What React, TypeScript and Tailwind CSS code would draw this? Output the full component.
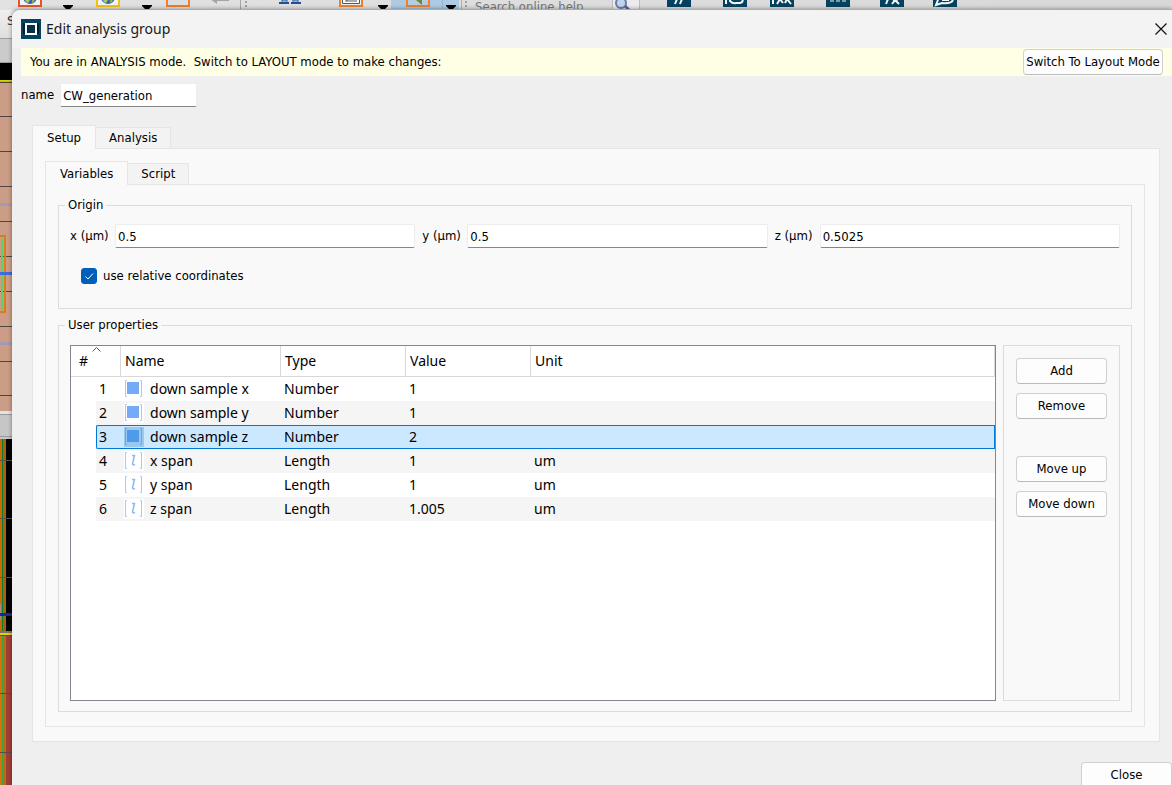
import { useState } from "react";
import type { ReactNode } from "react";

type Property = { name: string; type: "Number" | "Length"; value: string; unit: string };

const properties: Property[] = [
  { name: "down sample x", type: "Number", value: "1", unit: "" },
  { name: "down sample y", type: "Number", value: "1", unit: "" },
  { name: "down sample z", type: "Number", value: "2", unit: "" },
  { name: "x span", type: "Length", value: "1", unit: "um" },
  { name: "y span", type: "Length", value: "1", unit: "um" },
  { name: "z span", type: "Length", value: "1.005", unit: "um" },
];

function Caret() {
  return (
    <svg width="10" height="10" viewBox="0 0 10 10" className="shrink-0">
      <path d="M0 5h10v1L6 10H4L0 6z" fill="#000" />
    </svg>
  );
}

function Globe({ stroke }: { stroke: string }) {
  return (
    <svg width="24" height="10" viewBox="0 0 24 10" className="shrink-0">
      <path d="M1 -4V6H23V-4" fill="#f4f4f4" stroke={stroke} strokeWidth="2" />
      <ellipse cx="12" cy="-3" rx="7" ry="7" fill="#3563b8" />
      <path d="M7 -1c3-2 5 0 5 1l-2 3C8 3 7 1 7-1z" fill="#a9c85a" />
      <path d="M14 0l3-1-1 3-2 1z" fill="#8fb04c" />
    </svg>
  );
}

function Grip() {
  return (
    <svg width="3" height="10" viewBox="0 0 3 10" className="shrink-0">
      <path d="M0 1h2v2H0zM0 5h2v2H0zM0 9h2v1H0z" fill="#a0a0a0" />
    </svg>
  );
}

function NavyIcon({ children }: { children: ReactNode }) {
  return (
    <svg width="24" height="10" viewBox="0 0 24 10" className="shrink-0">
      <path d="M0 0h24v7H0z" fill="#04425f" />
      <g fill="none" stroke="#f3f6f8" strokeWidth="2">
        {children}
      </g>
    </svg>
  );
}

function Toolbar() {
  return (
    <div className="flex h-[10px] shrink-0 items-start overflow-hidden bg-linear-to-r from-[#e2e2e2] to-[#d8d8d8] pl-[18px]">
      <Globe stroke="#e2562c" />
      <div className="ml-[21px] mr-[23px]">
        <Caret />
      </div>
      <Globe stroke="#efc512" />
      <div className="ml-[22px] mr-[14px]">
        <Caret />
      </div>
      <svg width="24" height="10" viewBox="0 0 24 10" className="shrink-0">
        <path d="M1 -4V6H23V-4" fill="#dedede" stroke="#ee8030" strokeWidth="2" />
      </svg>
      <svg width="21" height="10" viewBox="0 0 21 10" className="ml-5 shrink-0">
        <path d="M0 -1L7 4V1H19V-1z" fill="#a4a4a4" />
      </svg>
      <div className="ml-[9px] mr-1 h-full w-px shrink-0 bg-[#a5a5a5]" />
      <Grip />
      <svg width="22" height="10" viewBox="0 0 22 10" className="ml-[31px] shrink-0">
        <path d="M3 0h5v3H3zM14 0h5v3h-5z" fill="#8fb9df" stroke="#3b69a5" />
        <path d="M0 2h10v2H0zM12 2h10v2H12z" fill="#244f8d" />
      </svg>
      <svg width="24" height="10" viewBox="0 0 24 10" className="ml-[38px] shrink-0">
        <path d="M1 -4V6H23V-4" fill="#eee" stroke="#ee8030" strokeWidth="2" />
        <path d="M3.500 -2V3.500H20.500V-2M8 0V1M6 1H18" fill="#fff" stroke="#555560" />
      </svg>
      <div className="ml-[15px] mr-[3px]">
        <Caret />
      </div>
      <div className="flex h-full shrink-0 bg-[#adcae2] pl-[15px]">
        <svg width="24" height="10" viewBox="0 0 24 10" className="mr-3 shrink-0">
          <path d="M1 -4V6H23V-4" fill="#b4cde0" stroke="#ee8030" strokeWidth="2" />
          <path d="M10 0h6v5z" fill="#6f8930" />
        </svg>
        <div className="border-l border-[#8ab8dc] px-[3px]">
          <Caret />
        </div>
      </div>
      <div className="ml-[2px] mr-[3px] h-full w-px shrink-0 bg-[#b0b0b0]" />
      <Grip />
      <div className="ml-[7px] w-[137px] shrink-0 text-[13px] leading-[14px] text-[#777]">Search online help</div>
      <div className="flex h-full w-7 shrink-0 border-x border-[#bcbcbc] bg-[#ececec] pl-px">
        <svg width="18" height="10" viewBox="0 0 18 10">
          <circle cx="7" cy="3" r="5" fill="#bfd4ee" stroke="#6c7ba5" strokeWidth="2" />
          <path d="M11 6l5 5" stroke="#596b91" strokeWidth="3" />
        </svg>
      </div>
      <div className="ml-[27px] flex shrink-0">
        <NavyIcon>
          <path d="M8 4L10 -1M13 4L15 -1" />
        </NavyIcon>
        <div className="ml-8 flex">
          <NavyIcon>
            <path d="M3 4V-1M7 -1V1Q10 4 13 3H17Q21 2 19 -1" />
          </NavyIcon>
        </div>
        <div className="ml-[23px] flex">
          <NavyIcon>
            <path d="M3 4V-1M7 4L10 -1L13 3M15 3L17 -1L21 4" />
          </NavyIcon>
        </div>
        <div className="ml-8 flex">
          <NavyIcon>
            <path d="M4 1h4M10 1h4M16 1h4" strokeWidth="1" />
          </NavyIcon>
        </div>
        <div className="ml-[30px] flex">
          <NavyIcon>
            <path d="M6 4L8 -1M12 4L15 0L19 4M13 -1L15 1L18 -1" />
          </NavyIcon>
        </div>
        <div className="ml-[29px] flex">
          <NavyIcon>
            <path d="M5 0L3 5L9 3Q18 4 20 0M9 0h7" />
          </NavyIcon>
        </div>
      </div>
    </div>
  );
}

function Viewport() {
  return (
    <svg width="12" height="747" viewBox="0 38 12 747" className="shrink-0" shapeRendering="crispEdges">
      <path d="M0 38h12v25H0z" fill="#cbcbcb" />
      <path d="M0 38h12M0 62h12" stroke="#9e9e9e" />
      <path d="M0 63h12v17H0z" fill="#000" />
      <path d="M0 80h12v1H0z" fill="#d8d400" />
      <path d="M0 81h12v330H0z" fill="#cb9d86" />
      <path
        d="M0 82.500h12M0 116.500h12M0 151.500h12M0 186.500h12M0 221.500h12M0 256.500h12M0 291.500h12M0 326.500h12M0 361.500h12M0 395.500h12"
        stroke="#4a4541"
      />
      <path d="M0 203h12v3H0zM0 342h12v3H0z" fill="#a09bae" />
      <path d="M0 236H5V312H0" fill="none" stroke="#df7a1c" strokeWidth="2" />
      <path d="M2 238V310" stroke="#5fcf68" strokeWidth="2" />
      <path d="M0 272h12v3H0z" fill="#3d6ddc" />
      <path d="M0 411h12v28H0z" fill="#c6c6c6" />
      <path d="M0 411h12v3H0z" fill="#e2e2e2" />
      <path d="M0 414.500h12M0 436.500h12" stroke="#9a9a9a" />
      <path d="M0 439h12v194H0z" fill="#000" />
      <path d="M0 439h6v194H0z" fill="#a9610a" />
      <path d="M0 439h2v194H0z" fill="#d06a00" />
      <path d="M2 439h1v194H2z" fill="#087c32" />
      <path d="M0 460.500h12M0 518.500h12M0 577.500h12" stroke="#54504c" />
      <path d="M0 604h1v16H0z" fill="#ab8978" />
      <path d="M0 613h12v3H0z" fill="#0a2f9c" />
      <path d="M0 631h12v2H0z" fill="#77736e" />
      <path d="M0 633h12v2H0z" fill="#e2d100" />
      <path d="M0 635h12v150H0z" fill="#a03e36" />
      <path d="M0 636h6v149H0z" fill="#b76d18" />
      <path d="M0 636h2v149H0z" fill="#d97008" />
      <path d="M2 636h1v149H2z" fill="#3ca045" />
      <path d="M0 635.500h12M0 693.500h12M0 752.500h12" stroke="#564b48" />
    </svg>
  );
}

function PropertyIcon({ type, selected }: { type: Property["type"]; selected: boolean }) {
  return (
    <svg width="20" height="20" viewBox="0 0 20 20" className="shrink-0">
      <path d="M0 0h20v20H0z" fill={selected ? "#99c9ef" : "#fff"} />
      <path d="M3 1.500H1.500V17.500H3M16 1.500H17.500V17.500H16" fill="none" stroke={selected ? "#66a6e3" : "#a9c9f2"} />
      {type === "Number" ? (
        <path d="M3 3h12v12H3z" fill={selected ? "#4f9be9" : "#75abf6"} />
      ) : (
        <path d="M8 4.500H10.500L8.500 13Q8.500 14.500 11 13.500" fill="none" stroke="#8db8f1" strokeWidth="1.500" />
      )}
    </svg>
  );
}

function PushButton({ children, className }: { children: string; className: string }) {
  return (
    <button
      type="button"
      className={`h-[26px] shrink-0 whitespace-nowrap rounded-[4px] border border-[#d0d0d0] border-b-[#bababa] bg-[#fdfdfd] text-center leading-4 ${className}`}
    >
      {children}
    </button>
  );
}

function LineEdit({ id, value, className }: { id: string; value: string; className: string }) {
  return (
    <input
      id={id}
      type="text"
      defaultValue={value}
      className={`h-6 min-w-0 rounded-[2px] border border-[#ececec] border-b-[#868686] bg-white px-[2px] leading-4 outline-none ${className}`}
    />
  );
}

function TabList({ tabs, active, onPick }: { tabs: string[]; active: string; onPick: (tab: string) => void }) {
  return (
    <div role="tablist" className="flex items-end">
      {tabs.map((tab) => (
        <button
          key={tab}
          role="tab"
          type="button"
          aria-selected={tab === active}
          onClick={() => onPick(tab)}
          className={
            tab === active
              ? "z-10 -mb-px h-6 border border-b-0 border-[#e5e5e5] bg-[#f9f9f9] px-[14px] leading-4"
              : "h-[21px] border border-b-0 border-l-0 border-[#e5e5e5] bg-[#f3f3f3] px-[13px] leading-4"
          }
        >
          {tab}
        </button>
      ))}
    </div>
  );
}

const origin = [
  { id: "x", label: "x (µm)", value: "0.5" },
  { id: "y", label: "y (µm)", value: "0.5" },
  { id: "z", label: "z (µm)", value: "0.5025" },
];

function PropertyTable() {
  const [selected, setSelected] = useState(2);
  const head = "border-b border-r border-[#d8d8d8] px-1 text-left font-normal";
  return (
    <div className="min-w-0 flex-1 border border-[#828790] bg-white font-['Noto_Sans',sans-serif] text-sm leading-5">
      <table className="w-full table-fixed border-separate border-spacing-0">
        <colgroup>
          <col className="w-[25px]" />
          <col className="w-[25px]" />
          <col className="w-40" />
          <col className="w-[125px]" />
          <col className="w-[125px]" />
          <col />
        </colgroup>
        <thead>
          <tr className="h-[31px]">
            <th colSpan={2} className="relative border-b border-r border-[#d8d8d8] pl-2 text-left font-normal">
              #
              <svg width="9" height="5" viewBox="0 0 9 5" className="absolute left-[21px] top-px">
                <path d="M0.500 4.500L4.500 0.500L8.500 4.500" fill="none" stroke="#555" />
              </svg>
            </th>
            <th className={head}>Name</th>
            <th className={head}>Type</th>
            <th className={head}>Value</th>
            <th className={head}>Unit</th>
          </tr>
        </thead>
        <tbody>
          {properties.map((p, i) => {
            const on = i === selected;
            const cell = on
              ? "border-y border-[#0078d4] bg-[#cce8ff]"
              : i % 2
                ? "border-y border-[#f5f5f5] bg-[#f5f5f5]"
                : "border-y border-white bg-white";
            return (
              <tr key={p.name} className="h-6" onClick={() => setSelected(i)}>
                <td className="p-0" />
                <td className={`p-0 text-left ${cell} ${on ? "rounded-l-[2px] border-l pl-[2px]" : "pl-[3px]"}`}>{i + 1}</td>
                <td className={`px-[3px] py-0 ${cell}`}>
                  <div className="flex h-5 items-center gap-[6px]">
                    <PropertyIcon type={p.type} selected={on} />
                    {p.name}
                  </div>
                </td>
                <td className={`px-[3px] py-0 ${cell}`}>{p.type}</td>
                <td className={`px-[3px] py-0 ${cell}`}>{p.value}</td>
                <td className={`px-[3px] py-0 ${cell} ${on ? "border-r" : ""}`}>{p.unit}</td>
              </tr>
            );
          })}
        </tbody>
      </table>
    </div>
  );
}

function Dialog() {
  const [tab, setTab] = useState("Setup");
  const [inner, setInner] = useState("Variables");
  const [relative, setRelative] = useState(true);
  return (
    <section
      role="dialog"
      aria-labelledby="dialog-title"
      className="absolute -bottom-2 left-3 right-0 top-[9px] flex flex-col rounded-tl-[8px] border-t border-[#ababab] bg-[#efefef] shadow-[0_0_4px_rgba(0,0,0,0.4)]"
    >
      <header className="flex h-[38px] shrink-0 items-center gap-[5px] rounded-tl-[8px] bg-[#f3f3f3] pl-[9px] pr-1">
        <svg width="20" height="20" viewBox="0 0 20 20">
          <path d="M0 0h20v20H0z" fill="#04425f" />
          <path d="M2 4h16v11H2z" fill="#06202f" />
          <path d="M5 5h10v10H5z" fill="#093048" stroke="#fff" strokeWidth="2" />
        </svg>
        <h1 id="dialog-title" className="flex-1 font-['Noto_Sans',sans-serif] text-sm text-[#1a1a1a]">
          Edit analysis group
        </h1>
        <button type="button" aria-label="Close window">
          <svg width="14" height="14" viewBox="0 0 14 14">
            <path d="M1.500 1.500L12.500 12.500M12.500 1.500L1.500 12.500" stroke="#111" strokeWidth="1.200" />
          </svg>
        </button>
      </header>
      <div className="ml-[9px] flex h-7 shrink-0 items-center justify-between bg-[#ffffe6] px-[9px]">
        <p className="whitespace-pre">{"You are in ANALYSIS mode.  Switch to LAYOUT mode to make changes:"}</p>
        <PushButton className="w-[140px]">Switch To Layout Mode</PushButton>
      </div>
      <div className="ml-[9px] mt-[7px] flex shrink-0 items-center gap-[6px]">
        <label htmlFor="name">name</label>
        <LineEdit id="name" value="CW_generation" className="w-[137px]" />
      </div>

      <div className="ml-5 mr-3 mt-[18px] flex min-h-0 flex-1 flex-col">
        <TabList tabs={["Setup", "Analysis"]} active={tab} onPick={setTab} />
        <div className="flex flex-1 flex-col border border-[#e5e5e5] bg-[#f9f9f9] pb-[14px] pl-3 pr-[14px] pt-3">
          <TabList tabs={["Variables", "Script"]} active={inner} onPick={setInner} />
          <div className="flex flex-1 flex-col gap-2 border border-[#e5e5e5] px-3 pb-[14px] pt-3">
            <fieldset className="h-28 border border-[#dcdcdc] px-[11px]">
              <legend className="-ml-[5px] px-[3px] leading-4">Origin</legend>
              <div className="mt-[11px] flex gap-[7px]">
                {origin.map((o) => (
                  <div key={o.id} className="flex flex-1 items-center gap-[6px]">
                    <label htmlFor={o.id} className="w-[39px] shrink-0 whitespace-nowrap">
                      {o.label}
                    </label>
                    <LineEdit id={o.id} value={o.value} className="flex-1" />
                  </div>
                ))}
              </div>
              <label className="ml-[11px] mt-5 flex w-fit items-center gap-[6px]">
                <span className="relative flex size-4">
                  <input
                    type="checkbox"
                    checked={relative}
                    onChange={() => setRelative(!relative)}
                    className="size-4 appearance-none rounded-[3px] border border-[#005fb8] bg-white checked:bg-[#005fb8]"
                  />
                  <svg width="16" height="16" viewBox="0 0 16 16" className="pointer-events-none absolute">
                    <path d="M4.500 8.500L7 11L12 5.500" fill="none" stroke="#fff" />
                  </svg>
                </span>
                use relative coordinates
              </label>
            </fieldset>
            <fieldset className="flex-1 border border-[#dcdcdc] px-[11px]">
              <legend className="-ml-[5px] px-[3px] leading-4">User properties</legend>
              <div className="flex h-full gap-[7px] pb-[10px] pt-3">
                <PropertyTable />
                <div className="flex w-[117px] flex-col gap-[9px] border border-[#dcdcdc] px-3 pt-3">
                  <PushButton className="w-full">Add</PushButton>
                  <PushButton className="w-full">Remove</PushButton>
                  <PushButton className="mt-7 w-full">Move up</PushButton>
                  <PushButton className="w-full">Move down</PushButton>
                </div>
              </div>
            </fieldset>
          </div>
        </div>
      </div>
      <footer className="flex shrink-0 justify-end pb-[5px] pt-5">
        <PushButton className="w-[91px]">Close</PushButton>
      </footer>
    </section>
  );
}

export default function App() {
  return (
    <main className="relative flex h-screen flex-col overflow-hidden bg-[#e0e0e0] font-['DejaVu_Sans_Condensed','Noto_Sans',sans-serif] text-[13px] leading-4 text-black">
      <Toolbar />
      <div className="h-7 shrink-0 bg-linear-to-b from-[#f0f0f0] to-[#dedede] pl-[7px] pt-[3px] text-[#333]">S</div>
      <Viewport />
      <Dialog />
    </main>
  );
}
